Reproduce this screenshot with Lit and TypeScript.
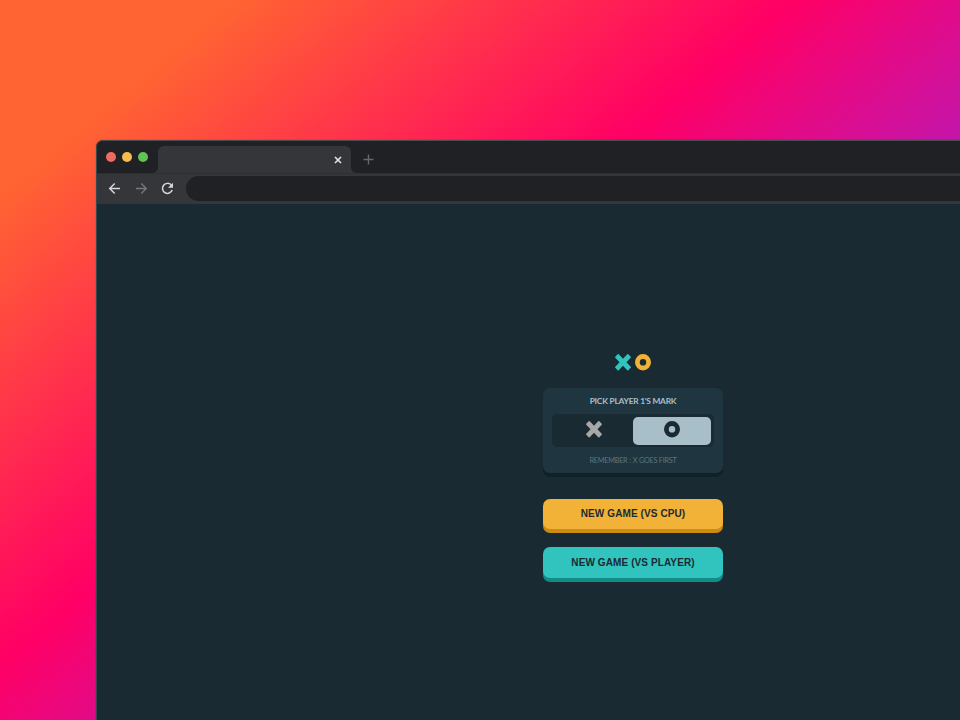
import { LitElement, html, css, svg } from "lit";
import { customElement, property } from "lit/decorators.js";

@customElement("mark-icon")
class MarkIcon extends LitElement {
  @property() mark: "x" | "o" = "x";

  static styles = css`
    :host { display: block; width: 16px; height: 16.5px; }
    svg { display: block; width: 100%; height: 100%; }
  `;

  render() {
    return html`<svg viewBox="0 0 64 64" fill="currentColor" preserveAspectRatio="none">
      ${this.mark === "x"
        ? svg`<path fill-rule="evenodd" d="M15.002 1.147 32 18.145 48.998 1.147a3 3 0 0 1 4.243 0l9.612 9.612a3 3 0 0 1 0 4.243L45.855 32l16.998 16.998a3 3 0 0 1 0 4.243l-9.612 9.612a3 3 0 0 1-4.243 0L32 45.855 15.002 62.853a3 3 0 0 1-4.243 0L1.147 53.24a3 3 0 0 1 0-4.243L18.145 32 1.147 15.002a3 3 0 0 1 0-4.243l9.612-9.612a3 3 0 0 1 4.243 0Z"/>`
        : svg`<path fill-rule="evenodd" d="M32 0a32 32 0 1 1 0 64a32 32 0 1 1 0-64Zm0 18.96a13.04 13.04 0 1 0 0 26.08a13.04 13.04 0 1 0 0-26.08Z"/>`}
    </svg>`;
  }
}

@customElement("browser-chrome")
class BrowserChrome extends LitElement {
  static styles = css`
    :host { display: block; }
    svg { display: block; flex: none; }
    .tabs { box-sizing: border-box; height: 32px; display: flex; align-items: flex-end; background: #202124; }
    .lights { display: flex; gap: 6px; padding: 0 10px 10.6px 9.3px; }
    .light { width: 10px; height: 10px; border-radius: 50%; }
    .red { background: #ee6b60; }
    .yellow { background: #f5bd4f; }
    .green { background: #61c454; }
    .tab { position: relative; box-sizing: border-box; width: 192.7px; height: 27px; border-radius: 6px 6px 0 0; background: #35363a; display: flex; align-items: center; justify-content: flex-end; padding: 0.5px 9px 0 0; }
    .tab::before, .tab::after { content: ""; position: absolute; bottom: 0; width: 5px; height: 5px; }
    .tab::before { left: -5px; background: radial-gradient(circle at 0 0, transparent 4.5px, #35363a 5px); }
    .tab::after { right: -5px; background: radial-gradient(circle at 100% 0, transparent 4.5px, #35363a 5px); }
    .plus { margin: 0 0 8px 12px; }
    .bar { box-sizing: border-box; height: 31px; display: flex; align-items: center; background: #35363a; border-top: 1px solid #2e2f32; padding: 0 0 1.5px 11px; }
    .nav { display: flex; gap: 13.5px; align-items: center; padding-bottom: 0.5px; }
    .address { flex: 1; height: 25px; margin-left: 12px; border-radius: 13px 0 0 13px; background: #202124; }
  `;

  render() {
    return html`
      <div class="tabs">
        <div class="lights">
          <span class="light red"></span><span class="light yellow"></span><span class="light green"></span>
        </div>
        <div class="tab">
          <svg width="8" height="8" viewBox="0 0 8 8" stroke="#e8e8e8" stroke-width="1.5"><path d="M1 1l6 6M7 1l-6 6"/></svg>
        </div>
        <svg class="plus" width="11" height="11" viewBox="0 0 11 11" stroke="#67686b" stroke-width="1.4"><path d="M5.5 .5v10M.5 5.5h10"/></svg>
      </div>
      <div class="bar">
        <div class="nav">
          <svg width="13" height="13" viewBox="0 0 13 13" fill="none" stroke="#d6d7d9" stroke-width="1.4"><path d="M12 6.5H1.8M6.7 1.5l-5 5 5 5"/></svg>
          <svg width="13" height="13" viewBox="0 0 13 13" fill="none" stroke="#77787b" stroke-width="1.3"><path d="M1 6.5h10.2M6.3 1.5l5 5-5 5"/></svg>
          <svg width="13" height="13" viewBox="0 0 13 13" fill="none" stroke="#d6d7d9" stroke-width="1.5"><path d="M11.2 8.1A5 5 0 1 1 10.2 3"/><path d="M12 .8v5H7Z" fill="#d6d7d9" stroke="none"/></svg>
        </div>
        <div class="address"></div>
      </div>
    `;
  }
}

@customElement("app-root")
class AppRoot extends LitElement {
  static styles = css`
    :host {
      box-sizing: border-box; display: block; width: 960px; height: 720px; overflow: hidden;
      padding: 140px 0 0 96px;
      background: linear-gradient(140deg, #ff6432 12.8%, #ff0065 43.52%, #7b2eff 84.34%);
    }
    .window {
      box-sizing: border-box; height: 580px; overflow: hidden; display: flex; flex-direction: column;
      border: 1px solid #4b4c50; border-width: 1px 0 0 1px; border-left-color: #334a50;
      border-radius: 7px 0 0 0; background: #1a2a33;
      box-shadow: 0 0 1px rgba(0, 0, 0, 0.6);
    }
    .page { flex: 1; display: flex; flex-direction: column; align-items: center; width: 1072px; padding-top: 150px; box-sizing: border-box; }
    .logo { display: flex; gap: 4px; margin-bottom: 17.5px; }
    .teal { color: #31c3bd; }
    .amber { color: #f2b137; }
    .panel {
      box-sizing: border-box; width: 180px; height: 85px; border-radius: 7px; background: #1f3641;
      box-shadow: 0 4px 0 #10212a; display: flex; flex-direction: column; align-items: center;
      font-family: Lato, sans-serif; text-transform: uppercase; white-space: nowrap;
    }
    .title { margin-top: 8px; font-size: 8.4px; line-height: 10px; font-weight: 700; color: #a8bfc9; letter-spacing: -0.24px; }
    .choices { box-sizing: border-box; width: 162px; height: 33px; margin-top: 8px; padding: 3px 3px 2.5px; display: flex; border-radius: 5px; background: #1a2a33; }
    .choice { flex: 1; display: flex; align-items: center; justify-content: center; border-radius: 5px; color: #a8a8a8; }
    .chosen { background: #a8bfc9; color: #1a2a33; }
    .choice mark-icon { margin-bottom: 2.5px; }
    .hint { margin-top: 9px; font-size: 7.3px; line-height: 9px; color: #5f747e; letter-spacing: -0.26px; }
    .hint span { margin: 0 0.3px; }
    .button {
      box-sizing: border-box; width: 180px; height: 30.5px; padding: 0 0 1px; border: 0; border-radius: 7px;
      font: 700 10px "Liberation Sans", Arial, sans-serif; letter-spacing: 0.1px; color: #1a2a33;
    }
    .cpu { margin-top: 25.5px; background: #f2b137; box-shadow: 0 4px 0 #cc8b13; }
    .player { margin-top: 18px; padding: 1px 0 0; background: #31c3bd; box-shadow: 0 4px 0 #118c87; }
  `;

  render() {
    return html`
      <div class="window">
        <browser-chrome></browser-chrome>
        <main class="page">
          <div class="logo">
            <mark-icon class="teal" mark="x"></mark-icon>
            <mark-icon class="amber" mark="o"></mark-icon>
          </div>
          <section class="panel">
            <div class="title">Pick player 1's mark</div>
            <div class="choices">
              <div class="choice"><mark-icon mark="x"></mark-icon></div>
              <div class="choice chosen"><mark-icon mark="o"></mark-icon></div>
            </div>
            <div class="hint">Remember <span>:</span> X goes first</div>
          </section>
          <button class="button cpu">NEW GAME (VS CPU)</button>
          <button class="button player">NEW GAME (VS PLAYER)</button>
        </main>
      </div>
    `;
  }
}
